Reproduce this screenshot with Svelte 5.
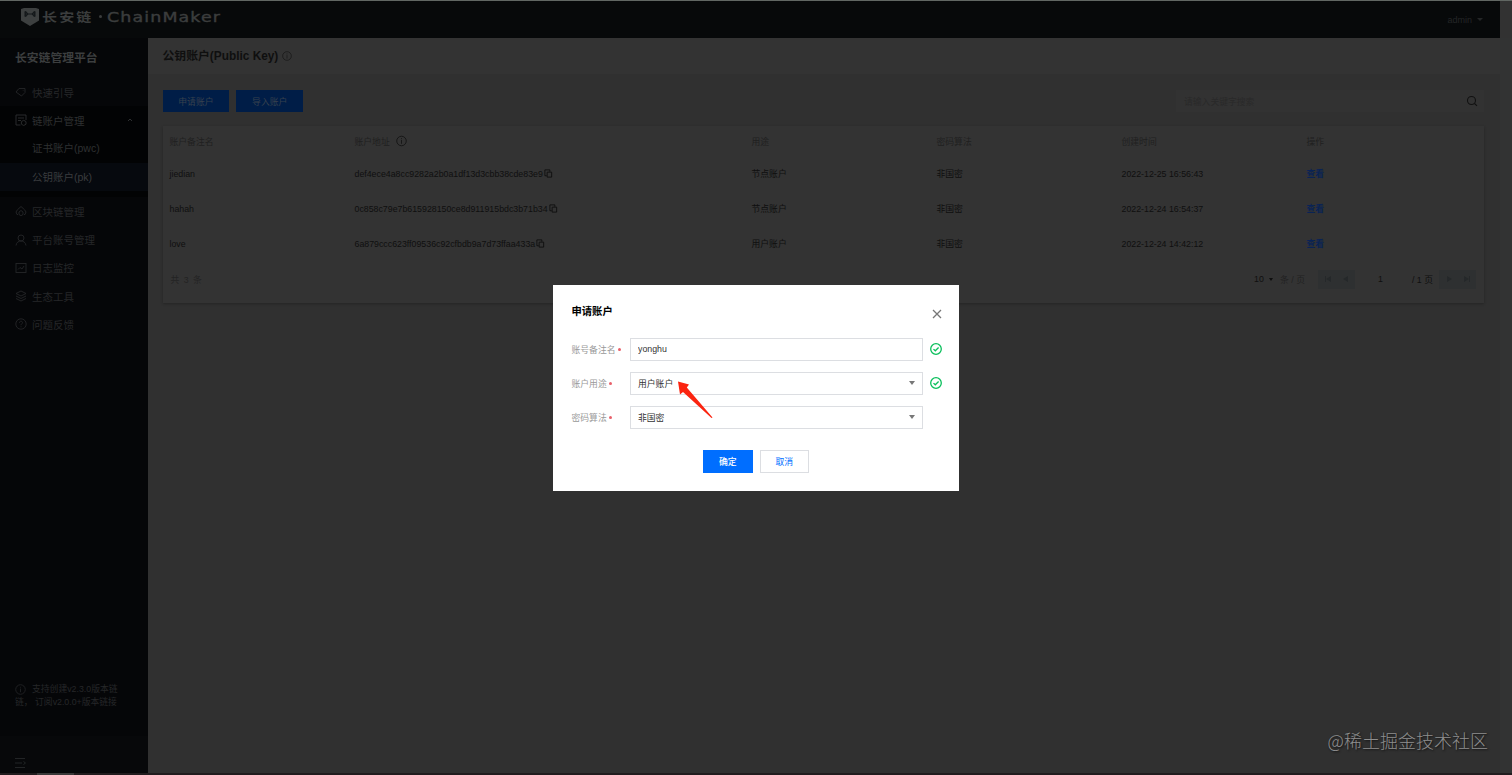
<script lang="ts">
	const nav = [
		{ icon: 'guide', label: '快速引导' },
		{
			icon: 'account',
			label: '链账户管理',
			children: [
				{ label: '证书账户(pwc)', active: false },
				{ label: '公钥账户(pk)', active: true }
			]
		},
		{ icon: 'chain', label: '区块链管理' },
		{ icon: 'user', label: '平台账号管理' },
		{ icon: 'log', label: '日志监控' },
		{ icon: 'tool', label: '生态工具' },
		{ icon: 'help', label: '问题反馈' }
	];

	const rows = [
		{
			name: 'jiedian',
			address: 'def4ece4a8cc9282a2b0a1df13d3cbb38cde83e9',
			usage: '节点账户',
			time: '2022-12-25 16:56:43'
		},
		{
			name: 'hahah',
			address: '0c858c79e7b615928150ce8d911915bdc3b71b34',
			usage: '节点账户',
			time: '2022-12-24 16:54:37'
		},
		{
			name: 'love',
			address: '6a879ccc623ff09536c92cfbdb9a7d73ffaa433a',
			usage: '用户账户',
			time: '2022-12-24 14:42:12'
		}
	];

	let open = $state(true);
	let remark = $state('yonghu');
</script>

{#snippet icon(name: string)}
	<svg class="icon" viewBox="0 0 12 12" fill="none" stroke="currentColor" stroke-width="0.9">
		{#if name === 'guide'}
			<path d="M4 2.5h6v4L6.5 10 1 6zM8.2 4.3v.6" />
		{:else if name === 'account'}
			<path d="M11 6V1H1v10h4.5M3 4h6M3 6.5h3" />
			<path d="M8.7 6.3l2.3 1.3v2.6l-2.3 1.3-2.3-1.3V7.6z" />
		{:else if name === 'chain'}
			<path d="M3 9.5H2L1 7l1.5-2.3L6 1.5l3.5 3.2L11 7l-1 2.5H9M6 5.5L8 7v2.5L6 10.7 4 9.5V7z" />
		{:else if name === 'user'}
			<circle cx="6" cy="4" r="3" />
			<path d="M1 11.5c.4-3 2.5-4.5 5-4.5s4.6 1.5 5 4.5" />
		{:else if name === 'log'}
			<rect x="1" y="1.5" width="10" height="9" />
			<path d="M3 7.5l2-2 2 1.5 2-3" />
		{:else if name === 'tool'}
			<path d="M6 1l5 2.5L6 6 1 3.5zM1 6l5 2.5L11 6M1 8.5L6 11l5-2.5" />
		{:else if name === 'info'}
			<circle cx="6" cy="6" r="5.2" />
			<path d="M6 5v4M6 3v1" />
		{:else}
			<circle cx="6" cy="6" r="5.2" />
			<path d="M4.5 4.8C4.5 2.6 7.6 2.8 7.5 4.7 7.4 5.8 6 5.9 6 7.2M6 8.3v1" />
		{/if}
	</svg>
{/snippet}

{#snippet check()}
	<svg class="check" viewBox="0 0 12 12" fill="none" stroke="#0abf5b" stroke-width="1.3">
		<circle cx="6" cy="6" r="5.3" />
		<path d="M3.5 6.1l1.8 1.7 3.3-3.3" />
	</svg>
{/snippet}

<div class="app">
	<header>
		<div class="brand">
			<svg class="logo" viewBox="0 0 18 18">
				<path fill="#3d4040" d="M0 1l3-1h12l3 1v11.5L9 18l-9-5.5z" />
				<path fill="none" stroke="#15191b" stroke-width="1.2" d="M4 3.5l3 2.5h4l3-2.5M4 8.500l3-2.500M14 8.500l-3-2.500" />
				<path fill="#15191b" d="M3.500 3.500h2v5h-2zM12.500 3.500h2v5h-2z" />
			</svg>
			<span class="brand-cn">长安链</span>
			<i></i>
			<span class="brand-en">ChainMaker</span>
		</div>
		<div class="admin">admin <span class="caret"></span></div>
	</header>

	<div class="body">
		<aside>
			<h1>长安链管理平台</h1>
			<nav>
				{#each nav as item}
					<div class="nav-item" class:opened={item.children}>
						{@render icon(item.icon)}
						<span>{item.label}</span>
						{#if item.children}
							<svg class="fold" viewBox="0 0 6 4" fill="none" stroke="currentColor">
								<path d="M1 3l2-2 2 2" />
							</svg>
						{/if}
					</div>
					{#if item.children}
						<div class="sub">
							{#each item.children as child}
								<div class="sub-item" class:active={child.active}>{child.label}</div>
							{/each}
						</div>
					{/if}
				{/each}
			</nav>
			<p class="version">{@render icon('info')}支持创建v2.3.0版本链<br />链，&nbsp;订阅v2.0.0+版本链接</p>
			<div class="collapse">
				<svg viewBox="0 0 11 10" fill="none" stroke="#222426">
					<path d="M0 .5h10M0 5h7M0 9.5h10M8.5 3.500L10.500 5l-2 1.500" />
				</svg>
			</div>
		</aside>

		<main>
			<div class="title">公钥账户(Public Key) {@render icon('info')}</div>
			<div class="content">
				<div class="toolbar">
					<button class="tool">申请账户</button>
					<button class="tool">导入账户</button>
					<div class="search">
						<span>请输入关键字搜索</span>
						<svg viewBox="0 0 12 12" fill="none" stroke="#111" stroke-width="1.100">
							<circle cx="5.500" cy="5.500" r="4" />
							<path d="M8.500 8.500l2.500 2.300" />
						</svg>
					</div>
				</div>

				<section class="card">
					<div class="row head">
						<span>账户备注名</span>
						<span class="with-icon">账户地址 {@render icon('info')}</span>
						<span>用途</span>
						<span>密码算法</span>
						<span>创建时间</span>
						<span>操作</span>
					</div>
					{#each rows as row}
						<div class="row">
							<span>{row.name}</span>
							<span class="address">
								{row.address}<svg viewBox="0 0 10 10" fill="none" stroke="currentColor">
									<path d="M3 7.500H1V1h5.500v2M3.500 3.500h5v5.500h-5z" />
								</svg>
							</span>
							<span>{row.usage}</span>
							<span>非国密</span>
							<span>{row.time}</span>
							<a href="#detail">查看</a>
						</div>
					{/each}
					<div class="pager">
						<span class="total">共 3 条</span>
						<span class="size">10 <span class="caret"></span></span>
						<span class="per">条 / 页</span>
						<span class="step">
							<svg viewBox="0 0 24 6"><path d="M0 0h1v6H0zM6 0v6L1 3zM23 0v6l-5-3z" /></svg>
						</span>
						<span class="current">1</span>
						<span class="pages">/ 1 页</span>
						<span class="step">
							<svg viewBox="0 0 24 6"><path d="M1 0v6l5-3zM18 0v6l5-3zM23 0h1v6h-1z" /></svg>
						</span>
					</div>
				</section>
			</div>
		</main>
		<div class="scroll"></div>
	</div>
	<div class="bottom"><i></i></div>
</div>

{#if open}
	<div class="mask">
		<div class="modal">
			<div class="modal-head">
				<h2>申请账户</h2>
				<button class="close" aria-label="关闭" onclick={() => (open = false)}>
					<svg viewBox="0 0 10 10" stroke="#777" stroke-width="1.300">
						<path d="M1 1l8 8M9 1L1 9" />
					</svg>
				</button>
			</div>
			<div class="field">
				<label for="remark">账号备注名<em></em></label>
				<input id="remark" class="control" bind:value={remark} />
				{@render check()}
			</div>
			<div class="field">
				<span class="label">账户用途<em></em></span>
				<div class="control">用户账户 <span class="caret"></span></div>
				{@render check()}
			</div>
			<div class="field">
				<span class="label">密码算法<em></em></span>
				<div class="control">非国密 <span class="caret"></span></div>
			</div>
			<div class="actions">
				<button class="primary">确定</button>
				<button onclick={() => (open = false)}>取消</button>
			</div>
		</div>
	</div>
{/if}

<svg class="arrow" viewBox="0 0 36 38">
	<path fill="#fb2410" d="M0 .5L11 3.500 8.800 6.600 34.500 36.500 33.500 37 5 11 2 13.500z" />
</svg>
<div class="watermark">@稀土掘金技术社区</div>

<style>
	:global(body) {
		background: #323232;
		overflow: hidden;
	}

	.app,
	.mask,
	.watermark {
		font-family: 'Liberation Sans', 'Noto Sans CJK SC', sans-serif;
		box-sizing: border-box;
	}

	.app {
		height: 775px;
		display: flex;
		flex-direction: column;
		font-size: 8.8px;
		color: #0f0f0f;
		border-top: 1px solid #616763;
	}

	button {
		font-family: inherit;
		border: 0;
		padding: 0;
		margin: 0;
	}

	.icon {
		width: 12px;
		height: 12px;
		flex: none;
	}

	.caret {
		border: 3px solid transparent;
		border-top: 4px solid currentColor;
		border-bottom: 0;
	}

	header {
		flex: none;
		height: 37px;
		margin-right: 12px;
		padding: 0 17px 0 21px;
		display: flex;
		align-items: center;
		justify-content: space-between;
		background: #07090a;
	}

	.brand {
		display: flex;
		align-items: center;
		height: 31px;
		margin-bottom: 6px;
		color: #3b3d3d;
		font-weight: bold;
	}

	.logo {
		width: 18px;
		height: 18px;
		margin-right: 3px;
	}

	.brand-cn {
		font-size: 12.5px;
		letter-spacing: 1.8px;
		width: 52px;
		white-space: nowrap;
		transform: scaleX(1.2);
		transform-origin: left;
	}

	.brand i {
		width: 3px;
		height: 3px;
		margin: 0 5px 0 5px;
		border-radius: 50%;
		background: currentColor;
	}

	/* wide lettering of the wordmark */
	.brand-en {
		font-family: 'DejaVu Sans', sans-serif;
		font-size: 14px;
		font-weight: normal;
		letter-spacing: 0.9px;
		-webkit-text-stroke: 0.4px currentColor;
		transform: scaleX(1.245);
		transform-origin: left;
	}

	.admin {
		display: flex;
		align-items: center;
		gap: 5px;
		color: #242627;
		font-size: 9px;
	}

	.admin .caret {
		border-width: 3px 3px 0;
	}

	.body {
		flex: 1;
		min-height: 0;
		display: flex;
	}

	aside {
		width: 148px;
		display: flex;
		flex-direction: column;
		background: #050608;
		color: #252628;
	}

	h1 {
		margin: 0;
		padding: 12px 15px 0;
		height: 28px;
		font-size: 11.8px;
		line-height: 17px;
		color: #3c3e3f;
	}

	.nav-item {
		height: 28.2px;
		padding: 0 15px;
		display: flex;
		align-items: center;
		gap: 5px;
		font-size: 10.5px;
	}

	.nav-item.opened {
		background: #020304;
		color: #2e3031;
	}

	.fold {
		width: 6px;
		height: 4px;
		margin-left: auto;
	}

	.sub {
		background: #020304;
		padding-bottom: 6px;
		font-size: 10.5px;
	}

	.sub-item {
		height: 28.5px;
		padding-left: 32px;
		line-height: 29px;
		color: #2e3031;
	}

	.sub-item.active {
		background: #06090e;
		color: #3a3c3e;
	}

	.version {
		margin: auto 15px 0;
		font-size: 8.8px;
		line-height: 13px;
		white-space: nowrap;
		height: 53px;
	}

	.version .icon {
		width: 11px;
		height: 11px;
		margin-right: 6px;
		vertical-align: -3px;
	}

	.collapse {
		height: 37px;
		padding: 22px 15px 0;
		box-sizing: border-box;
		background: #07080a;
	}

	.collapse svg {
		width: 11px;
		height: 10px;
		display: block;
	}

	main {
		flex: 1;
		background: #303030;
	}

	.title {
		height: 36px;
		padding: 0 0 3px 14.5px;
		box-sizing: border-box;
		display: flex;
		align-items: center;
		gap: 4px;
		background: #333;
		font-size: 11.85px;
		font-weight: bold;
	}

	.title .icon {
		width: 10px;
		color: #181818;
		margin-top: 3px;
	}

	.content {
		padding: 16px 16px 0 14.5px;
	}

	.toolbar {
		display: flex;
		gap: 7px;
		height: 22px;
	}

	.tool {
		width: 66.8px;
		font-size: 8.8px;
		background: #001d47;
		color: #37414e;
	}

	.search {
		margin-left: auto;
		width: 308px;
		padding: 0 6px 0 8px;
		box-sizing: border-box;
		display: flex;
		align-items: center;
		justify-content: space-between;
		background: #323232;
		color: #292929;
	}

	.search svg {
		width: 12px;
		height: 12px;
	}

	.card {
		margin-top: 14px;
		background: #333;
		box-shadow: 0 1px 2px #252525;
	}

	.row {
		height: 35.2px;
		padding-left: 7px;
		display: grid;
		grid-template-columns: 185px 397px 185px 185px 185px 1fr;
		align-items: center;
	}

	.row.head {
		height: 30px;
		color: #202020;
	}

	.with-icon {
		display: flex;
		align-items: center;
		gap: 6px;
	}

	.with-icon .icon {
		width: 11px;
		color: #111;
	}

	.address {
		display: flex;
		align-items: center;
	}

	.address svg {
		width: 9px;
		height: 9px;
		margin-left: 1px;
	}

	.row a {
		color: #0a2354;
		font-weight: bold;
		text-decoration: none;
	}

	.pager {
		height: 41px;
		padding: 0 8px 6px;
		box-sizing: border-box;
		display: flex;
		align-items: center;
	}

	.total {
		margin-right: auto;
		color: #232323;
		word-spacing: 2px;
	}

	.size {
		display: flex;
		align-items: center;
		gap: 5px;
		width: 26px;
	}

	.size .caret {
		border-width: 3px 2.5px 0;
	}

	.per {
		width: 38px;
		color: #222;
	}

	.step {
		width: 37px;
		height: 19px;
		display: grid;
		place-items: center;
		background: #2e3031;
	}

	.step svg {
		width: 24px;
		height: 6px;
		fill: #25282a;
	}

	.current {
		width: 51px;
		text-align: center;
	}

	.pages {
		width: 33px;
		text-align: center;
		white-space: nowrap;
	}

	.scroll {
		width: 12px;
		background: #323333;
	}

	.bottom {
		height: 2px;
		background: #211c1e;
	}

	.bottom i {
		display: block;
		width: 37px;
		height: 2px;
		margin-left: 37px;
		background: #393939;
	}

	.mask {
		position: absolute;
		inset: 0;
		height: 775px;
		display: grid;
		place-items: center;
	}

	.modal {
		width: 406px;
		height: 206px;
		margin-top: 1px;
		padding: 19px 18.5px;
		box-sizing: border-box;
		background: #fff;
		font-size: 8.8px;
	}

	.modal-head {
		display: flex;
		justify-content: space-between;
		height: 34px;
	}

	h2 {
		margin: 0;
		font-size: 10.3px;
		line-height: 16px;
		color: #000;
	}

	.close {
		width: 10px;
		height: 10px;
		margin: 5px -1px 0 0;
		background: none;
	}

	.close svg {
		display: block;
		width: 10px;
		height: 10px;
	}

	.field {
		display: flex;
		align-items: center;
		height: 22px;
		margin-bottom: 12px;
	}

	label,
	.label {
		width: 58.5px;
		flex: none;
		display: flex;
		align-items: center;
		color: #999;
	}

	em {
		width: 3px;
		height: 3px;
		margin-left: 2px;
		border-radius: 50%;
		background: #e8606a;
	}

	.control {
		width: 293px;
		height: 23px;
		flex: none;
		padding: 0 7px;
		box-sizing: border-box;
		display: flex;
		align-items: center;
		justify-content: space-between;
		border: 1px solid #dcdee2;
		border-radius: 0;
		outline: none;
		font-family: inherit;
		font-size: 8.8px;
		color: #333;
	}

	.control .caret {
		color: #777;
	}

	.check {
		width: 12px;
		height: 12px;
		flex: none;
		margin-left: 7px;
	}

	.actions {
		display: flex;
		justify-content: center;
		gap: 7px;
		margin-top: 22px;
	}

	.actions button {
		width: 49.5px;
		height: 23px;
		border: 1px solid #dcdee2;
		background: #fff;
		color: #006eff;
		font-size: 8.8px;
	}

	.actions .primary {
		background: #006eff;
		border-color: #006eff;
		color: #fff;
		font-weight: 500;
	}

	.arrow {
		position: absolute;
		left: 678px;
		top: 381px;
		width: 36px;
		height: 38px;
	}

	.watermark {
		position: absolute;
		right: 24px;
		bottom: 22px;
		font-family: 'Noto Sans CJK SC', sans-serif;
		font-size: 18px;
		line-height: 26px;
		font-weight: 300;
		color: #8e8e8e;
		text-shadow: 1px 1px 2px #111;
	}
</style>
